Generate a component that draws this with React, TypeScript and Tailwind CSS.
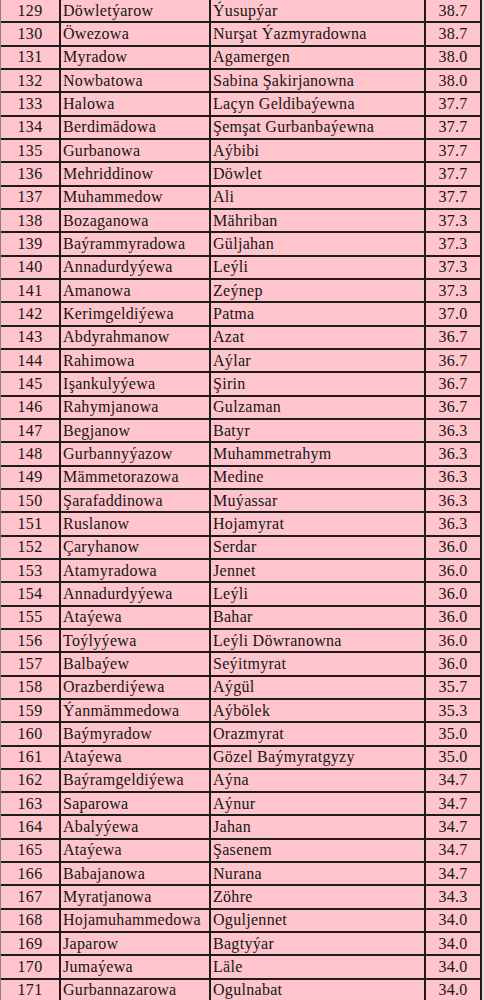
import React from "react";

const rows: [number, string, string, string][] = [
  [129, "Döwletýarow", "Ýusupýar", "38.7"],
  [130, "Öwezowa", "Nurşat Ýazmyradowna", "38.7"],
  [131, "Myradow", "Agamergen", "38.0"],
  [132, "Nowbatowa", "Sabina Şakirjanowna", "38.0"],
  [133, "Halowa", "Laçyn Geldibaýewna", "37.7"],
  [134, "Berdimädowa", "Şemşat Gurbanbaýewna", "37.7"],
  [135, "Gurbanowa", "Aýbibi", "37.7"],
  [136, "Mehriddinow", "Döwlet", "37.7"],
  [137, "Muhammedow", "Ali", "37.7"],
  [138, "Bozaganowa", "Mähriban", "37.3"],
  [139, "Baýrammyradowa", "Güljahan", "37.3"],
  [140, "Annadurdyýewa", "Leýli", "37.3"],
  [141, "Amanowa", "Zeýnep", "37.3"],
  [142, "Kerimgeldiýewa", "Patma", "37.0"],
  [143, "Abdyrahmanow", "Azat", "36.7"],
  [144, "Rahimowa", "Aýlar", "36.7"],
  [145, "Işankulyýewa", "Şirin", "36.7"],
  [146, "Rahymjanowa", "Gulzaman", "36.7"],
  [147, "Begjanow", "Batyr", "36.3"],
  [148, "Gurbannyýazow", "Muhammetrahym", "36.3"],
  [149, "Mämmetorazowa", "Medine", "36.3"],
  [150, "Şarafaddinowa", "Muýassar", "36.3"],
  [151, "Ruslanow", "Hojamyrat", "36.3"],
  [152, "Çaryhanow", "Serdar", "36.0"],
  [153, "Atamyradowa", "Jennet", "36.0"],
  [154, "Annadurdyýewa", "Leýli", "36.0"],
  [155, "Ataýewa", "Bahar", "36.0"],
  [156, "Toýlyýewa", "Leýli Döwranowna", "36.0"],
  [157, "Balbaýew", "Seýitmyrat", "36.0"],
  [158, "Orazberdiýewa", "Aýgül", "35.7"],
  [159, "Ýanmämmedowa", "Aýbölek", "35.3"],
  [160, "Baýmyradow", "Orazmyrat", "35.0"],
  [161, "Ataýewa", "Gözel Baýmyratgyzy", "35.0"],
  [162, "Baýramgeldiýewa", "Aýna", "34.7"],
  [163, "Saparowa", "Aýnur", "34.7"],
  [164, "Abalyýewa", "Jahan", "34.7"],
  [165, "Ataýewa", "Şasenem", "34.7"],
  [166, "Babajanowa", "Nurana", "34.7"],
  [167, "Myratjanowa", "Zöhre", "34.3"],
  [168, "Hojamuhammedowa", "Oguljennet", "34.0"],
  [169, "Japarow", "Bagtyýar", "34.0"],
  [170, "Jumaýewa", "Läle", "34.0"],
  [171, "Gurbannazarowa", "Ogulnabat", "34.0"],
];

export default function App() {
  return (
    <div
      className="w-[484px] h-[1000px] overflow-hidden bg-[#eedadd] text-[#161616] text-[16px] tracking-[0.3px]"
      style={{ fontFamily: '"Liberation Serif", "Times New Roman", serif' }}
    >
      <div className="w-[482px] border-l border-[#8a7b7e] bg-[#ffc4cc]">
        {rows.map(([n, s, f, sc]) => (
          <div
            key={n}
            className="flex h-[23.33px] border-b-2 border-[#1c1c1c] leading-none"
          >
            <div className="w-[60px] border-r-2 border-[#1c1c1c] flex items-center justify-center">
              {n}
            </div>
            <div className="w-[150px] border-r-2 border-[#1c1c1c] flex items-center pl-[2px] whitespace-nowrap">
              {s}
            </div>
            <div className="w-[215px] border-r-2 border-[#1c1c1c] flex items-center pl-[2px] whitespace-nowrap">
              {f}
            </div>
            <div className="w-[56px] border-r-2 border-[#1c1c1c] flex items-center justify-center">
              {sc}
            </div>
          </div>
        ))}
      </div>
    </div>
  );
}
